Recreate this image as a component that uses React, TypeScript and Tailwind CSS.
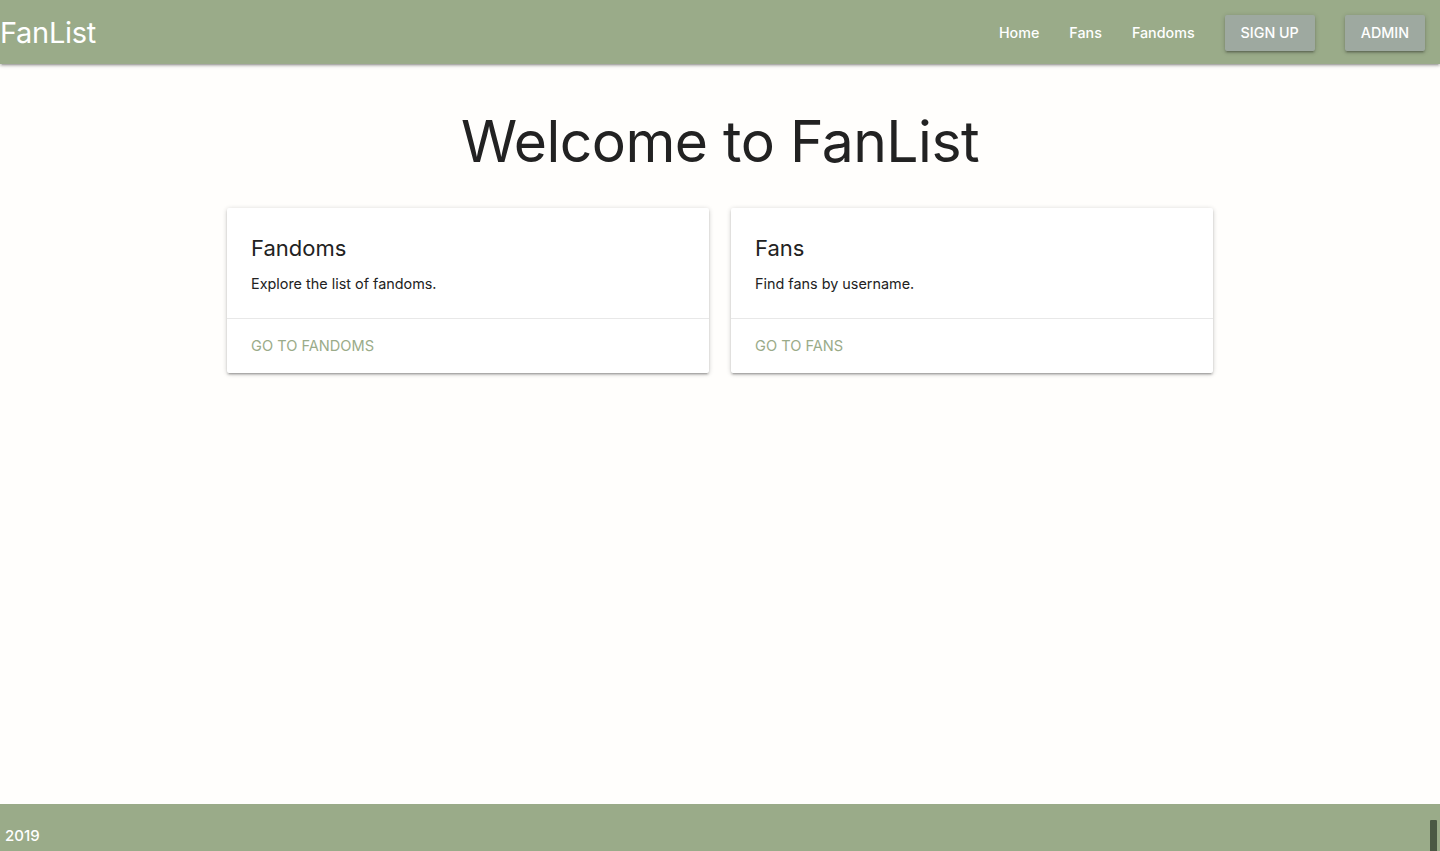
import React from "react";

export default function App() {
  const font = { fontFamily: "Inter, 'Noto Sans', sans-serif" };
  const shadow =
    "shadow-[0_2px_2px_0_rgba(0,0,0,0.14),0_3px_1px_-2px_rgba(0,0,0,0.12),0_1px_5px_0_rgba(0,0,0,0.2)]";
  return (
    <div className="min-h-[851px] flex flex-col bg-[#fffefc]" style={font}>
      <nav className={`h-16 bg-[#9aab89] flex items-center justify-between relative z-10 ${shadow}`}>
        <div className="text-white text-[29px] leading-none tracking-[-0.3px]">FanList</div>
        <ul className="flex items-center text-white text-[14.3px] mt-[2px]">
          <li className="px-[15px] font-medium">Home</li>
          <li className="px-[15px] font-medium">Fans</li>
          <li className="px-[15px] font-medium">Fandoms</li>
          <li className="px-[15px]">
            <div className={`h-9 px-4 flex items-center bg-[#9ea9a0] rounded-[2px] font-medium uppercase ${shadow}`}>Sign up</div>
          </li>
          <li className="px-[15px]">
            <div className={`h-9 px-4 flex items-center bg-[#9ea9a0] rounded-[2px] font-medium uppercase ${shadow}`}>Admin</div>
          </li>
        </ul>
      </nav>
      <main className="flex-1">
        <h1 className="text-center text-[57px] leading-none text-[#222] mt-[49px] tracking-[-0.5px]">Welcome to FanList</h1>
        <div className="flex justify-center gap-[22px] mt-[38px]">
          <Card title="Fandoms" text="Explore the list of fandoms." action="Go to fandoms" />
          <Card title="Fans" text="Find fans by username." action="Go to fans" />
        </div>
      </main>
      <footer className="h-[47px] bg-[#9aab89] relative flex items-end">
        <div className="text-white text-[15px] font-medium pl-[5px] pb-[4px]">2019</div>
        <div className="absolute right-[3px] bottom-0 w-[7px] h-[31px] bg-[#4b5844] rounded-t-[1px]" />
      </footer>
    </div>
  );
}

function Card({ title, text, action }: { title: string; text: string; action: string }) {
  return (
    <div className="w-[482px] bg-white rounded-[2px] shadow-[0_2px_2px_0_rgba(0,0,0,0.14),0_3px_1px_-2px_rgba(0,0,0,0.12),0_1px_5px_0_rgba(0,0,0,0.2)]">
      <div className="p-6 h-[110px]">
        <div className="text-[22px] leading-[32px] text-[#222]">{title}</div>
        <div className="text-[14.4px] leading-[22px] text-[#222] mt-[9px]">{text}</div>
      </div>
      <div className="border-t border-[#e8e8e8] h-[55px] px-6 flex items-center">
        <span className="uppercase text-[14.6px] text-[#9aab89] mt-[2px]">{action}</span>
      </div>
    </div>
  );
}
